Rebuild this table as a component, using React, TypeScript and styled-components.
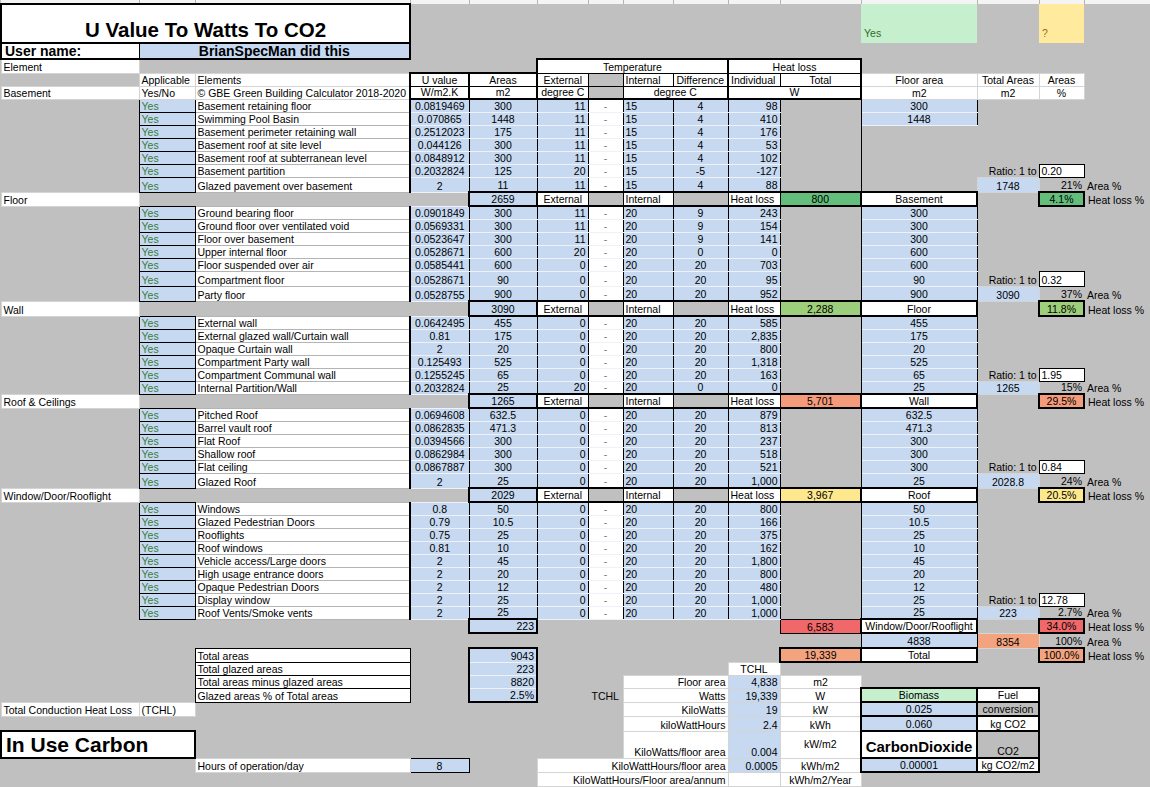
import React from 'react';
import styled, { createGlobalStyle, css } from 'styled-components';

const BLUE = '#c6d9f0';
const FONT = `"Liberation Sans", Arial, "Helvetica Neue", sans-serif`;
const GREEN = '#63be7b';
const LGREEN = '#9dce7b';
const SALMON = '#f39b7b';
const YELLOW = '#fde88e';
const RED = '#f0686a';
const PEACH = '#f4a37f';
const MINT = '#c6efce';

const GlobalStyle = createGlobalStyle`
  html, body { margin: 0; padding: 0; background: #c0c0c0; overflow: hidden; }
  body { font-family: ${FONT}; }
`;

const Page = styled.main`
  width: 1150px;
  height: 787px;
  overflow: hidden;
  background: #c0c0c0;
`;

const Sheet = styled.table`
  width: 1150px;
  table-layout: fixed;
  border-collapse: collapse;
  font-family: ${FONT};
  font-size: 10.5px;
  color: #000;
`;

const Row = styled.tr<{ $h: number }>`
  height: ${(p) => p.$h}px;
`;

type Align = 'left' | 'center' | 'right';
type Line = 'none' | 'thin' | 'soft' | 'thick' | 'grid' | 'pale';

const lines = {
  none: css`border: none;`,
  thin: css`border: 1px solid #000;`,
  soft: css`border: 1px solid #d4d4d4;`,
  thick: css`border: 2px solid #000;`,
  grid: css`
    border-left: 1px solid #000;
    border-right: 1px solid #000;
    border-top: 1px solid #b4b4b4;
    border-bottom: 1px solid #b4b4b4;
  `,
  pale: css`
    border-left: 1px solid #000;
    border-right: 1px solid #000;
    border-top: 1px solid #eef2f8;
    border-bottom: 1px solid #eef2f8;
  `,
};

interface CellProps {
  $bg?: string;
  $align?: Align;
  $line?: Line;
  $ink?: string;
  $v?: 'top' | 'middle' | 'bottom';
  $t?: number;
  $r?: number;
  $b?: number;
  $l?: number;
}

const Cell = styled.td<CellProps>`
  padding: 0 2px;
  line-height: 11px;
  white-space: nowrap;
  vertical-align: ${(p) => p.$v ?? 'bottom'};
  text-align: ${(p) => p.$align ?? 'left'};
  background: ${(p) => p.$bg ?? 'transparent'};
  color: ${(p) => p.$ink ?? '#000'};
  ${(p) => lines[p.$line ?? 'none']}
  ${(p) => (p.$t ? `border-top: ${p.$t}px solid #000;` : '')}
  ${(p) => (p.$r ? `border-right: ${p.$r}px solid #000;` : '')}
  ${(p) => (p.$b ? `border-bottom: ${p.$b}px solid #000;` : '')}
  ${(p) => (p.$l ? `border-left: ${p.$l}px solid #000;` : '')}
`;

const Blank = styled(Cell)``;
const Note = styled(Cell)`
  padding-left: 3px;
`;

const StripCell = styled.td`
  padding: 0;
  height: 3px;
  line-height: 0;
  font-size: 0;
  background: #f4f4f4;
  border-right: 1px solid #b4b4b4;
`;

const TitleCell = styled.td`
  font-size: 20.5px;
  font-weight: bold;
  line-height: 22px;
  text-align: center;
  vertical-align: bottom;
  padding: 0 0 1px;
  background: #fff;
  border: 2px solid #000;
  white-space: nowrap;
`;

const UserLabel = styled.td`
  font-size: 14px;
  font-weight: bold;
  line-height: 14px;
  padding: 0 3px;
  background: #fff;
  border: 2px solid #000;
  border-right: 1px solid #000;
  vertical-align: bottom;
  white-space: nowrap;
`;

const UserValue = styled(UserLabel)`
  background: ${BLUE};
  text-align: center;
  border: 2px solid #000;
  border-left: 1px solid #000;
`;

const FlagCell = styled.td<{ $bg: string; $ink: string }>`
  background: ${(p) => p.$bg};
  color: ${(p) => p.$ink};
  vertical-align: bottom;
  padding: 0 3px 4px;
  line-height: 11px;
`;

const SoftCell = styled(Cell).attrs<CellProps>((p) => ({
  $line: p.$line ?? 'soft',
  $bg: p.$bg ?? '#fff',
}))``;

const HeadCell = styled(Cell).attrs<CellProps>((p) => ({
  $line: p.$line ?? 'thin',
  $bg: p.$bg ?? '#fff',
}))``;

const YesCell = styled(Cell).attrs<CellProps>(() => ({
  $line: 'thin',
  $bg: BLUE,
  $ink: '#3b7b3b',
}))``;

const ElemCell = styled(Cell).attrs<CellProps>(() => ({
  $line: 'grid',
  $bg: '#fff',
}))``;

const ValueCell = styled(Cell).attrs<CellProps>((p) => ({
  $line: p.$line ?? 'pale',
  $bg: p.$bg ?? BLUE,
}))``;

const DashCell = styled(Cell).attrs<CellProps>(() => ({
  $line: 'pale',
  $bg: '#fff',
  $align: 'center',
  $ink: '#777',
}))``;

const Spacer = styled(Cell)`
  border-right: 1px solid #000;
`;

const TagCell = styled(Cell).attrs<CellProps>((p) => ({
  $line: 'thick',
  $bg: p.$bg ?? '#fff',
  $align: p.$align ?? 'center',
}))``;

const RatioBox = styled(Cell).attrs<CellProps>(() => ({
  $line: 'thin',
  $bg: '#fff',
}))``;

const BoxLabel = styled(Cell).attrs<CellProps>(() => ({
  $line: 'thin',
  $bg: '#fff',
}))``;

const SumCell = styled(Cell).attrs<CellProps>((p) => ({
  $line: 'pale',
  $bg: BLUE,
  $align: 'right',
  $l: 2,
  $r: 2,
  $t: p.$t,
  $b: p.$b,
}))``;

const BigCell = styled.td`
  font-size: 21px;
  font-weight: bold;
  line-height: 22px;
  padding: 0 4px 1px;
  background: #fff;
  border: 2px solid #000;
  vertical-align: bottom;
  white-space: nowrap;
`;

const CarbonCell = styled.td`
  font-size: 15px;
  font-weight: bold;
  text-align: center;
  vertical-align: middle;
  padding: 3px 0 0;
  background: #fff;
  border: 2px solid #000;
  white-space: nowrap;
`;

type Item = [string, string, string, string, string, string, string, string?];

const basement: Item[] = [
  ['Basement retaining floor', '0.0819469', '300', '11', '15', '4', '98', '300'],
  ['Swimming Pool Basin', '0.070865', '1448', '11', '15', '4', '410', '1448'],
  ['Basement perimeter retaining wall', '0.2512023', '175', '11', '15', '4', '176'],
  ['Basement roof at site level', '0.044126', '300', '11', '15', '4', '53'],
  ['Basement roof at subterranean level', '0.0848912', '300', '11', '15', '4', '102'],
  ['Basement partition', '0.2032824', '125', '20', '15', '-5', '-127'],
  ['Glazed pavement over basement', '2', '11', '11', '15', '4', '88'],
];

const floors: Item[] = [
  ['Ground bearing floor', '0.0901849', '300', '11', '20', '9', '243', '300'],
  ['Ground floor over ventilated void', '0.0569331', '300', '11', '20', '9', '154', '300'],
  ['Floor over basement', '0.0523647', '300', '11', '20', '9', '141', '300'],
  ['Upper internal floor', '0.0528671', '600', '20', '20', '0', '0', '600'],
  ['Floor suspended over air', '0.0585441', '600', '0', '20', '20', '703', '600'],
  ['Compartment floor', '0.0528671', '90', '0', '20', '20', '95', '90'],
  ['Party floor', '0.0528755', '900', '0', '20', '20', '952', '900'],
];

const walls: Item[] = [
  ['External wall', '0.0642495', '455', '0', '20', '20', '585', '455'],
  ['External glazed wall/Curtain wall', '0.81', '175', '0', '20', '20', '2,835', '175'],
  ['Opaque Curtain wall', '2', '20', '0', '20', '20', '800', '20'],
  ['Compartment Party wall', '0.125493', '525', '0', '20', '20', '1,318', '525'],
  ['Compartment Communal wall', '0.1255245', '65', '0', '20', '20', '163', '65'],
  ['Internal Partition/Wall', '0.2032824', '25', '20', '20', '0', '0', '25'],
];

const roofs: Item[] = [
  ['Pitched Roof', '0.0694608', '632.5', '0', '20', '20', '879', '632.5'],
  ['Barrel vault roof', '0.0862835', '471.3', '0', '20', '20', '813', '471.3'],
  ['Flat Roof', '0.0394566', '300', '0', '20', '20', '237', '300'],
  ['Shallow roof', '0.0862984', '300', '0', '20', '20', '518', '300'],
  ['Flat ceiling', '0.0867887', '300', '0', '20', '20', '521', '300'],
  ['Glazed Roof', '2', '25', '0', '20', '20', '1,000', '25'],
];

const openings: Item[] = [
  ['Windows', '0.8', '50', '0', '20', '20', '800', '50'],
  ['Glazed Pedestrian Doors', '0.79', '10.5', '0', '20', '20', '166', '10.5'],
  ['Rooflights', '0.75', '25', '0', '20', '20', '375', '25'],
  ['Roof windows', '0.81', '10', '0', '20', '20', '162', '10'],
  ['Vehicle access/Large doors', '2', '45', '0', '20', '20', '1,800', '45'],
  ['High usage entrance doors', '2', '20', '0', '20', '20', '800', '20'],
  ['Opaque Pedestrian Doors', '2', '12', '0', '20', '20', '480', '12'],
  ['Display window', '2', '25', '0', '20', '20', '1,000', '25'],
  ['Roof Vents/Smoke vents', '2', '25', '0', '20', '20', '1,000', '25'],
];

const widths = [138, 56, 215, 59, 68, 51, 35, 50, 55, 52, 81, 116, 62, 45, 67];

function Items({ rows, ratio, sum, pct, tall = [] }: {
  rows: Item[]; ratio: string; sum: string; pct: string; tall?: number[];
}) {
  return (
    <>
      {rows.map((r, i) => {
        const last = i === rows.length - 1;
        const pre = i === rows.length - 2;
        return (
          <Row key={r[0]} $h={tall.includes(i) ? 15 : 13}>
            <Blank />
            <YesCell>Yes</YesCell>
            <ElemCell>{r[0]}</ElemCell>
            <ValueCell $align="center" $l={2}>{r[1]}</ValueCell>
            <ValueCell $align="center">{r[2]}</ValueCell>
            <ValueCell $align="right">{r[3]}</ValueCell>
            <DashCell>-</DashCell>
            <ValueCell>{r[4]}</ValueCell>
            <ValueCell $align="center">{r[5]}</ValueCell>
            <ValueCell $align="right">{r[6]}</ValueCell>
            <Spacer />
            {r[7] ? <ValueCell $align="center">{r[7]}</ValueCell> : <Blank />}
            {pre ? (
              <>
                <Note $align="right">Ratio: 1 to</Note>
                <RatioBox>{ratio}</RatioBox>
                <Blank />
              </>
            ) : last ? (
              <>
                <ValueCell $line="soft" $align="center">{sum}</ValueCell>
                <Note $align="right">{pct}</Note>
                <Note>Area %</Note>
              </>
            ) : (
              <>
                <Blank />
                <Blank />
                <Blank />
              </>
            )}
          </Row>
        );
      })}
    </>
  );
}

function SectionRow({ label, total, heat, tone, tag, pct, h = 14 }: {
  label: string; total: string; heat: string; tone: string; tag: string; pct: string; h?: number;
}) {
  return (
    <Row $h={h}>
      <SoftCell>{label}</SoftCell>
      <Blank colSpan={3} />
      <ValueCell $line="thick" $align="center">{total}</ValueCell>
      <HeadCell $align="center" $t={2} $b={2}>External</HeadCell>
      <HeadCell $bg="transparent" $t={2} $b={2} />
      <HeadCell $t={2} $b={2}>Internal</HeadCell>
      <HeadCell $bg="transparent" $t={2} $b={2} />
      <HeadCell $t={2} $b={2}>Heat loss</HeadCell>
      <HeadCell $bg={tone} $align="center" $t={2} $b={2}>{heat}</HeadCell>
      <TagCell>{tag}</TagCell>
      <Blank />
      <TagCell $bg={tone}>{pct}</TagCell>
      <Note>Heat loss %</Note>
    </Row>
  );
}

export default function App() {
  return (
    <Page>
      <GlobalStyle />
      <Sheet>
        <colgroup>
          {widths.map((w, i) => (
            <col key={i} style={{ width: w }} />
          ))}
        </colgroup>
        <tbody>
          <Row $h={3}>
            {widths.map((_, i) => (
              <StripCell key={i} />
            ))}
          </Row>
          <Row $h={39}>
            <TitleCell colSpan={3}>U Value To Watts To CO2</TitleCell>
            <Blank colSpan={8} />
            <FlagCell $bg={MINT} $ink="#2f6b2f">Yes</FlagCell>
            <Blank />
            <FlagCell $bg="#ffea9e" $ink="#9c6a10">?</FlagCell>
            <Blank />
          </Row>
          <Row $h={16}>
            <UserLabel>User name:</UserLabel>
            <UserValue colSpan={2}>BrianSpecMan did this</UserValue>
            <Blank colSpan={12} />
          </Row>
          <Row $h={14}>
            <SoftCell>Element</SoftCell>
            <Blank colSpan={4} />
            <HeadCell colSpan={4} $align="center" $t={2} $l={2} $r={2}>Temperature</HeadCell>
            <HeadCell colSpan={2} $align="center" $t={2} $l={2} $r={2}>Heat loss</HeadCell>
            <Blank colSpan={4} />
          </Row>
          <Row $h={13}>
            <Blank />
            <SoftCell>Applicable</SoftCell>
            <SoftCell>Elements</SoftCell>
            <HeadCell $align="center" $t={2} $l={2}>U value</HeadCell>
            <HeadCell $align="center" $t={2} $l={2}>Areas</HeadCell>
            <HeadCell $align="center" $l={2}>External</HeadCell>
            <HeadCell $bg="transparent" />
            <HeadCell>Internal</HeadCell>
            <HeadCell $align="center">Difference</HeadCell>
            <HeadCell $l={2}>Individual</HeadCell>
            <HeadCell $align="center" $r={2}>Total</HeadCell>
            <SoftCell $align="center">Floor area</SoftCell>
            <SoftCell $align="center">Total Areas</SoftCell>
            <SoftCell $align="center">Areas</SoftCell>
            <Blank />
          </Row>
          <Row $h={13}>
            <SoftCell>Basement</SoftCell>
            <SoftCell>Yes/No</SoftCell>
            <SoftCell>© GBE Green Building Calculator 2018-2020</SoftCell>
            <HeadCell $align="center" $l={2} $b={2}>W/m2.K</HeadCell>
            <HeadCell $align="center" $l={2} $b={2}>m2</HeadCell>
            <HeadCell $align="center" $l={2} $b={2}>degree C</HeadCell>
            <HeadCell $bg="transparent" $b={2} />
            <HeadCell colSpan={2} $align="center" $b={2}>degree C</HeadCell>
            <HeadCell colSpan={2} $align="center" $l={2} $r={2} $b={2}>W</HeadCell>
            <SoftCell $align="center">m2</SoftCell>
            <SoftCell $align="center">m2</SoftCell>
            <SoftCell $align="center">%</SoftCell>
            <Blank />
          </Row>

          <Items rows={basement} ratio="0.20" sum="1748" pct="21%" tall={[6]} />
          <SectionRow label="Floor" total="2659" heat="800" tone={GREEN} tag="Basement" pct="4.1%" />
          <Items rows={floors} ratio="0.32" sum="3090" pct="37%" tall={[5, 6]} />
          <SectionRow label="Wall" total="3090" heat="2,288" tone={LGREEN} tag="Floor" pct="11.8%" h={15} />
          <Items rows={walls} ratio="1.95" sum="1265" pct="15%" />
          <SectionRow label="Roof & Ceilings" total="1265" heat="5,701" tone={SALMON} tag="Wall" pct="29.5%" />
          <Items rows={roofs} ratio="0.84" sum="2028.8" pct="24%" tall={[5]} />
          <SectionRow label="Window/Door/Rooflight" total="2029" heat="3,967" tone={YELLOW} tag="Roof" pct="20.5%" />
          <Items rows={openings} ratio="12.78" sum="223" pct="2.7%" />

          <Row $h={14}>
            <Blank colSpan={4} />
            <ValueCell $line="thick" $align="right">223</ValueCell>
            <Blank colSpan={5} />
            <HeadCell $bg={RED} $align="center">6,583</HeadCell>
            <TagCell>Window/Door/Rooflight</TagCell>
            <Blank />
            <TagCell $bg={RED}>34.0%</TagCell>
            <Note>Heat loss %</Note>
          </Row>
          <Row $h={15}>
            <Blank colSpan={11} />
            <ValueCell $line="thin" $align="center">4838</ValueCell>
            <SoftCell $bg={PEACH} $align="center">8354</SoftCell>
            <Note $align="right">100%</Note>
            <Note>Area %</Note>
          </Row>
          <Row $h={14}>
            <Blank colSpan={2} />
            <BoxLabel>Total areas</BoxLabel>
            <Blank />
            <SumCell $t={2}>9043</SumCell>
            <Blank colSpan={5} />
            <TagCell $bg={PEACH}>19,339</TagCell>
            <TagCell>Total</TagCell>
            <Blank />
            <TagCell $bg={PEACH}>100.0%</TagCell>
            <Note>Heat loss %</Note>
          </Row>
          <Row $h={13}>
            <Blank colSpan={2} />
            <BoxLabel>Total glazed areas</BoxLabel>
            <Blank />
            <SumCell>223</SumCell>
            <Blank colSpan={4} />
            <SoftCell $align="center">TCHL</SoftCell>
            <Blank colSpan={5} />
          </Row>
          <Row $h={13}>
            <Blank colSpan={2} />
            <BoxLabel>Total areas minus glazed areas</BoxLabel>
            <Blank />
            <SumCell>8820</SumCell>
            <Blank colSpan={2} />
            <SoftCell colSpan={2} $align="right">Floor area</SoftCell>
            <ValueCell $line="soft" $align="right">4,838</ValueCell>
            <SoftCell $align="center">m2</SoftCell>
            <Blank colSpan={4} />
          </Row>
          <Row $h={14}>
            <Blank colSpan={2} />
            <BoxLabel>Glazed areas % of Total areas</BoxLabel>
            <Blank />
            <SumCell $b={2}>2.5%</SumCell>
            <Blank />
            <Blank $align="center">TCHL</Blank>
            <SoftCell colSpan={2} $align="right">Watts</SoftCell>
            <ValueCell $line="soft" $align="right">19,339</ValueCell>
            <SoftCell $align="center">W</SoftCell>
            <TagCell $bg={MINT}>Biomass</TagCell>
            <TagCell>Fuel</TagCell>
            <Blank colSpan={2} />
          </Row>
          <Row $h={14}>
            <SoftCell>Total Conduction Heat Loss</SoftCell>
            <SoftCell>(TCHL)</SoftCell>
            <Blank colSpan={5} />
            <SoftCell colSpan={2} $align="right">KiloWatts</SoftCell>
            <ValueCell $line="soft" $align="right">19</ValueCell>
            <SoftCell $align="center">kW</SoftCell>
            <TagCell $bg={BLUE}>0.025</TagCell>
            <TagCell $bg="#bdbdbd">conversion</TagCell>
            <Blank colSpan={2} />
          </Row>
          <Row $h={15}>
            <Blank colSpan={7} />
            <SoftCell colSpan={2} $align="right">kiloWattHours</SoftCell>
            <ValueCell $line="soft" $align="right">2.4</ValueCell>
            <SoftCell $align="center">kWh</SoftCell>
            <TagCell $bg={BLUE}>0.060</TagCell>
            <TagCell>kg CO2</TagCell>
            <Blank colSpan={2} />
          </Row>
          <Row $h={27}>
            <BigCell colSpan={2}>In Use Carbon</BigCell>
            <Blank colSpan={5} />
            <SoftCell colSpan={2} $align="right">KiloWatts/floor area</SoftCell>
            <ValueCell $line="soft" $align="right">0.004</ValueCell>
            <SoftCell $align="center" $v="middle">kW/m2</SoftCell>
            <CarbonCell>CarbonDioxide</CarbonCell>
            <TagCell $bg="#bdbdbd">CO2</TagCell>
            <Blank colSpan={2} />
          </Row>
          <Row $h={14}>
            <Blank colSpan={2} />
            <SoftCell>Hours of operation/day</SoftCell>
            <ValueCell $line="thin" $align="center">8</ValueCell>
            <Blank />
            <SoftCell colSpan={4} $align="right">KiloWattHours/floor area</SoftCell>
            <ValueCell $line="soft" $align="right">0.0005</ValueCell>
            <SoftCell $align="center">kWh/m2</SoftCell>
            <TagCell $bg={BLUE}>0.00001</TagCell>
            <TagCell>kg CO2/m2</TagCell>
            <Blank colSpan={2} />
          </Row>
          <Row $h={14}>
            <Blank colSpan={5} />
            <SoftCell colSpan={4} $align="right">KiloWattHours/Floor area/annum</SoftCell>
            <SoftCell />
            <SoftCell $align="center">kWh/m2/Year</SoftCell>
            <Blank colSpan={4} />
          </Row>
        </tbody>
      </Sheet>
    </Page>
  );
}
